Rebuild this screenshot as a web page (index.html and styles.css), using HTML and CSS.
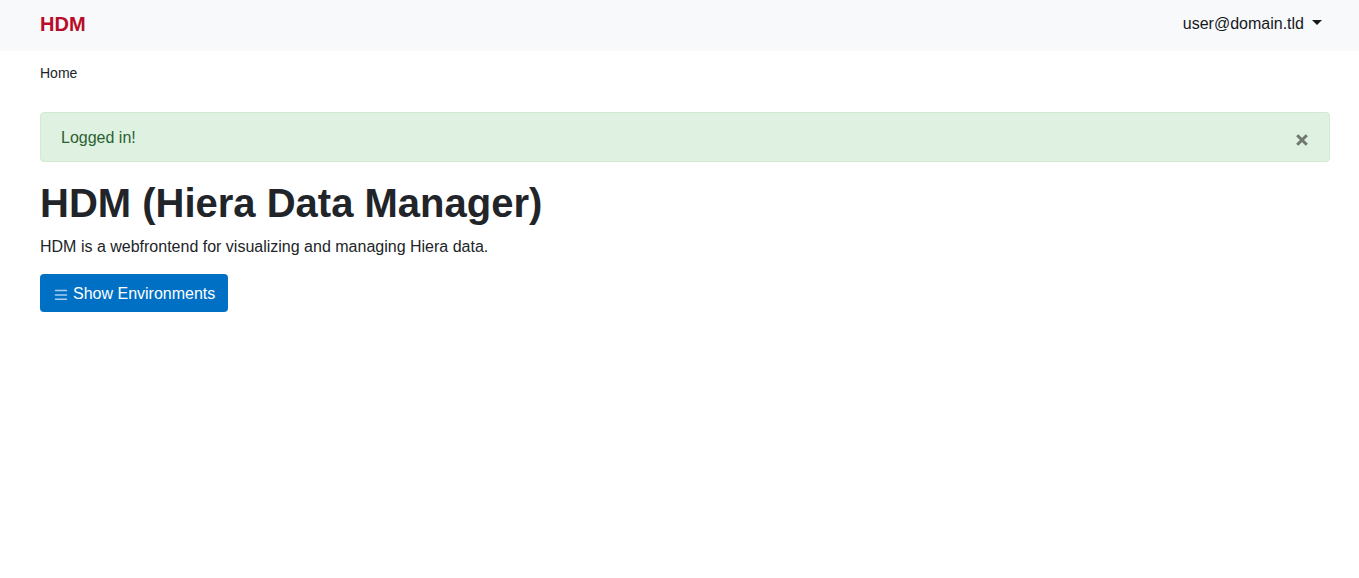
FILE: index.html
```html
<!DOCTYPE html>
<html lang="en">
<head>
<meta charset="utf-8">
<title>HDM</title>
<link rel="stylesheet" href="styles.css">
</head>
<body>
<header class="navbar">
  <a class="brand" href="#">HDM</a>
  <button class="user-menu" type="button" aria-haspopup="true">user@domain.tld<span class="caret"></span></button>
</header>
<nav class="breadcrumb" aria-label="Breadcrumb"><a href="#">Home</a></nav>
<main class="content">
  <div class="alert" role="alert">
    <span>Logged in!</span>
    <button class="close" type="button" aria-label="Close">
      <svg width="12" height="12" viewBox="0 0 12 12" aria-hidden="true"><path d="M1.2 1.2 10.8 10.8M10.8 1.2 1.2 10.8"/></svg>
    </button>
  </div>
  <h1 class="title">HDM (Hiera Data Manager)</h1>
  <p class="lead">HDM is a webfrontend for visualizing and managing Hiera data.</p>
  <a class="btn" href="#">
    <svg class="btn-icon" width="16" height="16" viewBox="0 0 16 16" aria-hidden="true"><path d="M2.5 4.6h11M2.5 8.9h11M2.5 13.2h11"/></svg>
    <span>Show Environments</span>
  </a>
</main>
</body>
</html>
```
FILE: styles.css
```css
* { box-sizing: border-box; }
body {
  margin: 0;
  background: #fff;
  color: #212529;
  font: 16px/24px "Liberation Sans", Arial, sans-serif;
}
.navbar {
  display: flex;
  align-items: center;
  justify-content: space-between;
  padding: 9px 37px 12px 40px;
  background: #f8f9fb;
}
.brand {
  color: #b90c2a;
  font-size: 20px;
  line-height: 30px;
  font-weight: bold;
  text-decoration: none;
}
.user-menu {
  display: flex;
  align-items: center;
  gap: 8px;
  padding: 0;
  border: 0;
  background: none;
  color: #16181b;
  font: inherit;
}
.caret {
  margin-bottom: 4px;
  border: 5px solid transparent;
  border-top-color: currentColor;
  border-bottom: 0;
}
.breadcrumb {
  padding: 12px 40px;
  font-size: 14px;
  line-height: 20px;
}
.breadcrumb a {
  color: inherit;
  text-decoration: none;
}
.content { padding: 17px 29px 0 40px; }
.alert {
  display: flex;
  align-items: center;
  justify-content: space-between;
  padding: 13px 20px 11px;
  border: 1px solid #d0ead2;
  border-radius: 4px;
  background: #dff2e1;
  color: #2b6032;
}
.close {
  display: flex;
  padding: 4px 1px 0;
  border: 0;
  background: none;
}
.close path { stroke: #6f7970; stroke-width: 3; }
.title {
  margin: 17px 0 8px;
  font-size: 40px;
  line-height: 48px;
}
.lead { margin: 0 0 15px; }
.btn {
  display: inline-flex;
  align-items: center;
  gap: 4px;
  padding: 8px 13px 6px;
  border-radius: 4px;
  background: #0070c5;
  color: #fff;
  text-decoration: none;
}
.btn-icon path { stroke: #a9d0ee; stroke-width: 1.5; stroke-linecap: round; }
```
